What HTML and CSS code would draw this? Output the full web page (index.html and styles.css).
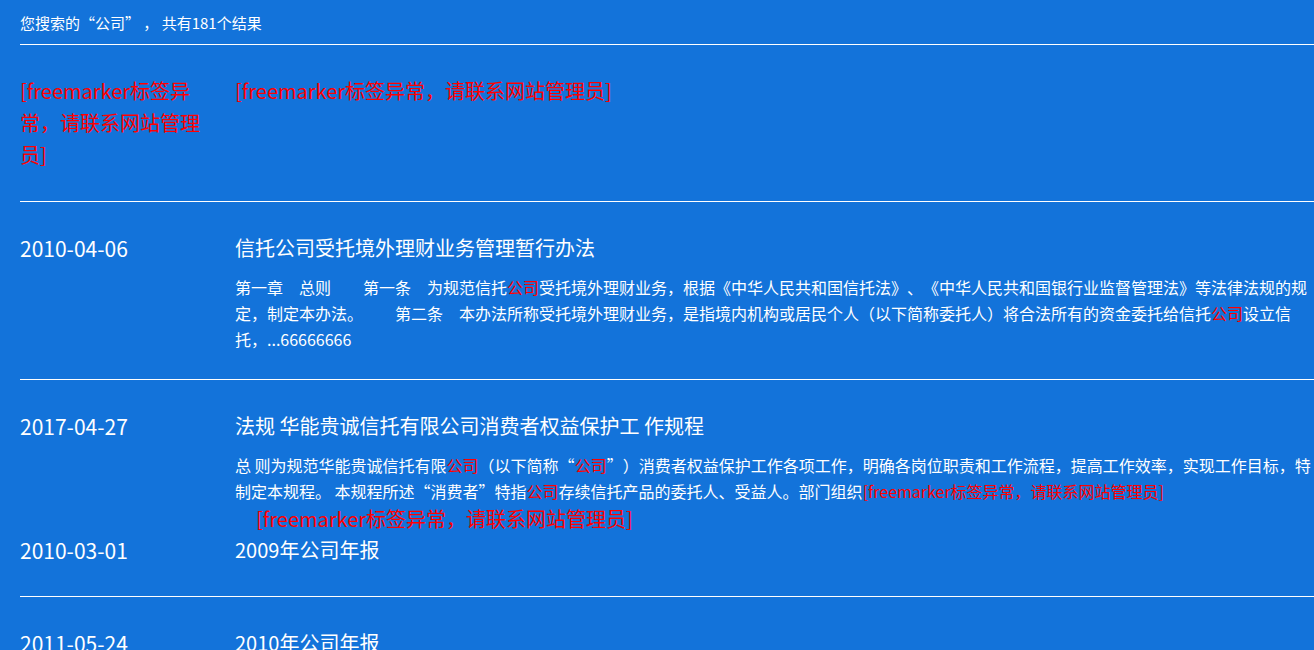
FILE: index.html
```html
<!DOCTYPE html>
<html lang="zh-CN">
<head>
<meta charset="utf-8">
<title>搜索结果</title>
<link rel="stylesheet" href="styles.css">
</head>
<body>
<div class="page">
  <div class="summary">您搜索的“公司” ， 共有181个结果</div>
  <ul class="results">
    <li class="result result-first">
      <div class="date err">[freemarker标签异常，请联系网站管理员]</div>
      <div class="main">
        <div class="title err-title">[freemarker标签异常，请联系网站管理员]</div>
      </div>
    </li>
    <li class="result">
      <div class="date">2010-04-06</div>
      <div class="main">
        <div class="title">信托公司受托境外理财业务管理暂行办法</div>
        <p class="desc">第一章　总则　　第一条　为规范信托<em>公司</em>受托境外理财业务，根据《中华人民共和国信托法》、《中华人民共和国银行业监督管理法》等法律法规的规定，制定本办法。　　第二条　本办法所称受托境外理财业务，是指境内机构或居民个人（以下简称委托人）将合法所有的资金委托给信托<em>公司</em>设立信托，...66666666</p>
      </div>
    </li>
    <li class="result result-open">
      <div class="date">2017-04-27</div>
      <div class="main">
        <div class="title">法规 华能贵诚信托有限公司消费者权益保护工 作规程</div>
        <p class="desc">总 则为规范华能贵诚信托有限<em>公司</em>（以下简称“<em>公司</em>”）消费者权益保护工作各项工作，明确各岗位职责和工作流程，提高工作效率，实现工作目标，特制定本规程。 本规程所述“消费者”特指<em>公司</em>存续信托产品的委托人、受益人。部门组织<em>[freemarker标签异常，请联系网站管理员]</em></p>
        <div class="err-line">[freemarker标签异常，请联系网站管理员]</div>
      </div>
    </li>
    <li class="result result-cont">
      <div class="date">2010-03-01</div>
      <div class="main">
        <div class="title">2009年公司年报</div>
      </div>
    </li>
    <li class="result">
      <div class="date">2011-05-24</div>
      <div class="main">
        <div class="title">2010年公司年报</div>
      </div>
    </li>
  </ul>
</div>
</body>
</html>
```
FILE: styles.css
```css
html, body {
  margin: 0;
  padding: 0;
  background: #1373da;
}
body {
  font-family: "Noto Sans CJK SC", "Noto Sans", sans-serif;
  color: #ffffff;
  overflow: hidden;
  text-spacing-trim: space-all;
}
.page {
  padding-left: 20px;
}
.summary {
  font-size: 15px;
  line-height: 20px;
  padding: 13px 0 11px;
  border-bottom: 1px solid #ffffff;
}
.results {
  list-style: none;
  margin: 0;
  padding: 0;
}
.result {
  display: flex;
  padding: 30px 0 27px;
  border-bottom: 1px solid #ffffff;
}
.result-first {
  padding-bottom: 30px;
}
.result-open {
  border-bottom: none;
  padding-bottom: 0;
}
.result-cont {
  padding-top: 0;
  padding-bottom: 30px;
}
.date {
  flex: 0 0 190px;
  margin-right: 25px;
  font-size: 21px;
  line-height: 32px;
}
.err {
  color: #ff0000;
  font-size: 20px;
}
.main {
  flex: 1 1 auto;
  min-width: 0;
}
.title {
  font-size: 20px;
  line-height: 32px;
}
.err-title {
  color: #ff0000;
}
.desc {
  margin: 10px 0 0;
  font-size: 16px;
  line-height: 26px;
}
.desc em {
  font-style: normal;
  color: #ff0000;
}
.err-line {
  color: #ff0000;
  font-size: 20px;
  line-height: 30px;
  padding-left: 21px;
}
```
